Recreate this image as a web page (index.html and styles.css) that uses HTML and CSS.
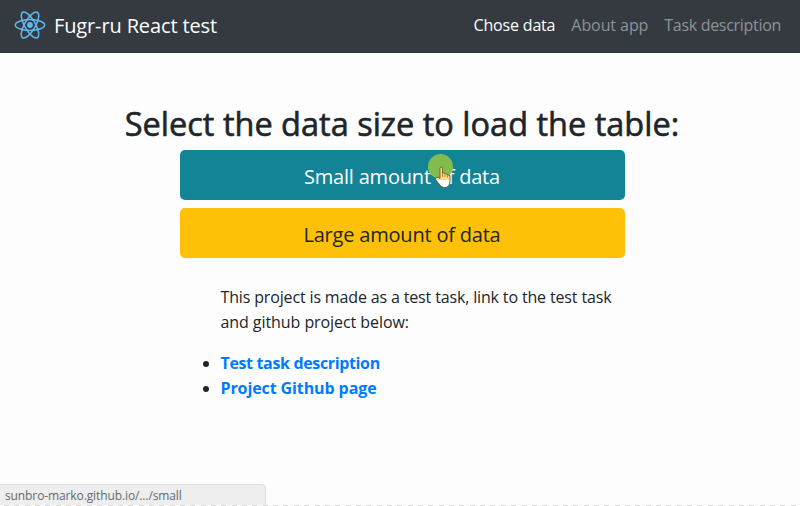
FILE: index.html
```html
<!DOCTYPE html>
<html lang="en">
<head>
<meta charset="utf-8">
<title>Fugr-ru React test</title>
<link rel="stylesheet" href="styles.css">
</head>
<body>
<header class="navbar">
  <a class="brand">
    <svg class="logo" viewBox="0 0 32 28" width="32" height="28" fill="none" stroke="#61b9f2" stroke-width="1.5">
      <ellipse cx="16" cy="14" rx="14.7" ry="5.4"/>
      <ellipse cx="16" cy="14" rx="14.7" ry="5.4" transform="rotate(60 16 14)"/>
      <ellipse cx="16" cy="14" rx="14.7" ry="5.4" transform="rotate(120 16 14)"/>
      <circle cx="16" cy="14" r="2.9" fill="#61b9f2" stroke="none"/>
    </svg>
    <span class="brand-name">Fugr-ru React test</span>
  </a>
  <nav class="links">
    <a class="link link-chose active">Chose data</a>
    <a class="link link-about">About app</a>
    <a class="link link-task">Task description</a>
  </nav>
</header>
<main class="content">
  <h1 class="title"><span>Select the data size to load the table:</span></h1>
  <div class="choices">
    <button class="btn btn-info"><span>Small amount of data</span></button>
    <button class="btn btn-warning"><span>Large amount of data</span></button>
  </div>
  <div class="about">
    <p class="note"><span class="note-first">This project is made as a test task, link to the test task</span><br><span class="note-second">and github project below:</span></p>
    <ul class="list">
      <li><a class="list-task">Test task description</a></li>
      <li><a class="list-page">Project Github page</a></li>
    </ul>
  </div>
</main>
<div class="status"><span>sunbro-marko.github.io/.../small</span></div>
<div class="dashes"></div>
<div class="spot"></div>
<svg class="pointer" viewBox="0 0 18 24" width="18" height="24">
  <defs>
    <linearGradient id="hand" x1="0" y1="0" x2="0" y2="1">
      <stop offset="0.63" stop-color="#ffdb78"/>
      <stop offset="0.63" stop-color="#fff"/>
    </linearGradient>
  </defs>
  <path d="M6 13V3.5Q6 2 7.2 2T8.5 3.5V8Q10.8 7.3 11 9Q13.2 8.2 13.5 10Q16 9.2 16 11.5V16Q16 19 14.5 21Q13 22.5 10.5 22.5Q7.5 22.5 6 20L1.5 14.5Q1 12.5 3 12.3Q4.5 12 6 13.5Z" fill="url(#hand)" stroke="#55542f" stroke-width=".8"/>
  <path d="M8.5 8v4M11 9v3M13.5 10v2.5" stroke="#b28b32" stroke-width="1"/>
</svg>
</body>
</html>
```
FILE: styles.css
```css
* { box-sizing: border-box; }
body {
  margin: 0;
  height: 506px;
  overflow: hidden;
  position: relative;
  background: #fdfdfd;
  color: #212529;
  font-family: "Open Sans", "Noto Sans", sans-serif;
  font-size: 16px;
  line-height: 25px;
}
span, a { white-space: nowrap; }
.navbar {
  height: 53px;
  padding: 0 19px 3px 14px;
  background: #343a40;
  display: flex;
  align-items: center;
  justify-content: space-between;
}
.brand { display: flex; align-items: center; gap: 8px; color: #fff; font-size: 20px; }
.logo { display: block; }
.brand-name { letter-spacing: -0.13px; }
.links { display: flex; gap: 16px; }
.link { color: #8f9296; letter-spacing: -0.3px; }
.link-chose { letter-spacing: -0.18px; }
.link-about { letter-spacing: -0.08px; }
.active { color: #fff; }
.content { display: flex; flex-direction: column; align-items: center; padding: 51px 0 0 4px; }
.title {
  margin: 0;
  font-size: 32.5px;
  line-height: 39px;
  font-weight: 500;
  -webkit-text-stroke: 0.6px #212529;
}
.choices { width: 445px; margin-top: 7px; display: flex; flex-direction: column; gap: 8px; }
.btn {
  height: 50px;
  padding: 3px 0 0;
  border: 0;
  border-radius: 5px;
  font: 20px/30px "Open Sans", "Noto Sans", sans-serif;
  letter-spacing: -0.2px;
  color: #212529;
}
.btn-info { background: #138496; color: #fff; }
.btn-warning { background: #ffc107; }
.about { width: 445px; padding: 27px 0 0 41px; }
.note { margin: 0 0 16px; }
.note-first { letter-spacing: -0.15px; }
.note-second { letter-spacing: -0.07px; }
.list { margin: 0; padding: 0; }
.list a { color: #007bff; font-weight: 700; }
.list-task { letter-spacing: -0.35px; }
.list-page { letter-spacing: -0.1px; }
.status {
  position: absolute;
  left: -1px;
  bottom: 0;
  width: 267px;
  height: 22px;
  padding-left: 5px;
  border: 1px solid #dedede;
  border-radius: 0 4px 0 0;
  background: #eee;
  color: #66696b;
  font-size: 12px;
  line-height: 22px;
  letter-spacing: -0.11px;
}
.dashes {
  position: absolute;
  left: 0;
  right: 0;
  bottom: 0;
  height: 1px;
  background: repeating-linear-gradient(90deg, #fdfdfd 0 4px, #d8d8d8 4px 9px, #fdfdfd 9px 10.35px);
}
.spot { position: absolute; left: 428px; top: 154px; width: 25px; height: 25px; border-radius: 50%; background: #82bc4f; }
.pointer { position: absolute; left: 434px; top: 165px; }
```
